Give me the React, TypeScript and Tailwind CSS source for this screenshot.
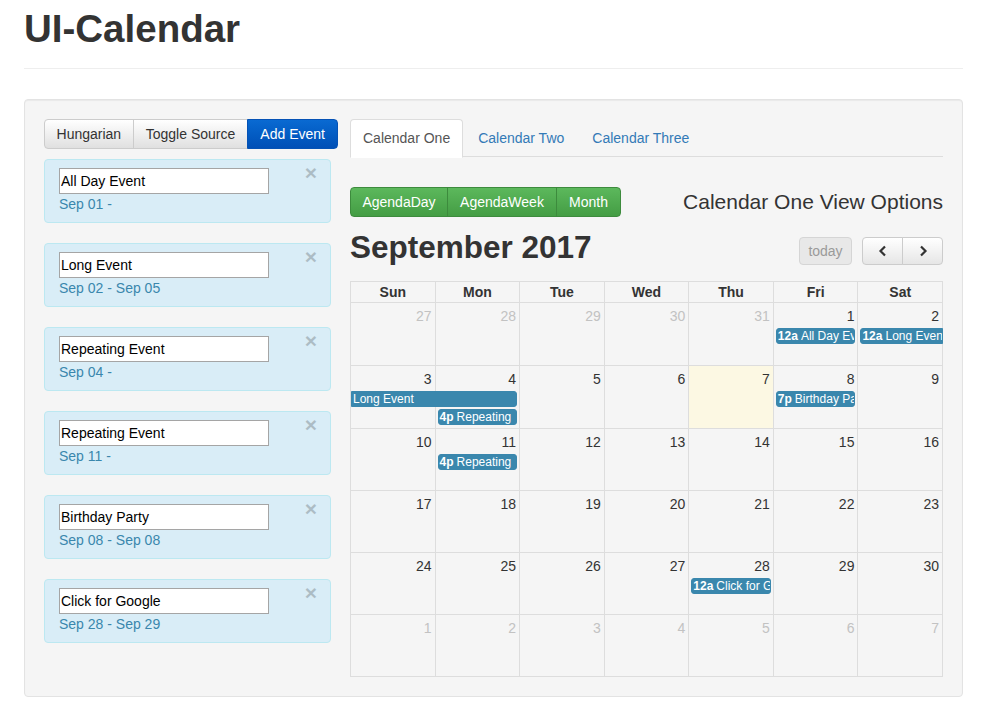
import React from "react";

type Ev = { col: number; span: number; row: number; time?: string; title: string; contLeft?: boolean; contRight?: boolean };
type Week = { days: { n: number; other?: boolean; today?: boolean }[]; h: string; events: Ev[] };

const colStart = ["", "col-start-1", "col-start-2", "col-start-3", "col-start-4", "col-start-5", "col-start-6", "col-start-7"];
const colSpan = ["", "col-span-1", "col-span-2", "col-span-3"];
const rowStart = ["", "row-start-2", "row-start-3"];

const mk = (nums: number[], other: (n: number, i: number) => boolean, today = -1) =>
  nums.map((n, i) => ({ n, other: other(n, i), today: n === today && !other(n, i) }));

const weeks: Week[] = [
  {
    days: mk([27, 28, 29, 30, 31, 1, 2], (_, i) => i < 5),
    h: "h-[63px]",
    events: [
      { col: 6, span: 1, row: 1, time: "12a", title: "All Day Event" },
      { col: 7, span: 1, row: 1, time: "12a", title: "Long Event", contRight: true },
    ],
  },
  {
    days: mk([3, 4, 5, 6, 7, 8, 9], () => false, 7),
    h: "h-[63px]",
    events: [
      { col: 1, span: 2, row: 1, title: "Long Event", contLeft: true },
      { col: 2, span: 1, row: 2, time: "4p", title: "Repeating" },
      { col: 6, span: 1, row: 1, time: "7p", title: "Birthday Party" },
    ],
  },
  {
    days: mk([10, 11, 12, 13, 14, 15, 16], () => false),
    h: "h-[62px]",
    events: [{ col: 2, span: 1, row: 1, time: "4p", title: "Repeating" }],
  },
  { days: mk([17, 18, 19, 20, 21, 22, 23], () => false), h: "h-[62px]", events: [] },
  {
    days: mk([24, 25, 26, 27, 28, 29, 30], () => false),
    h: "h-[62px]",
    events: [{ col: 5, span: 1, row: 1, time: "12a", title: "Click for Google" }],
  },
  { days: mk([1, 2, 3, 4, 5, 6, 7], () => true), h: "h-[62px]", events: [] },
];

const cards = [
  { title: "All Day Event", date: "Sep 01 -" },
  { title: "Long Event", date: "Sep 02 - Sep 05" },
  { title: "Repeating Event", date: "Sep 04 -" },
  { title: "Repeating Event", date: "Sep 11 -" },
  { title: "Birthday Party", date: "Sep 08 - Sep 08" },
  { title: "Click for Google", date: "Sep 28 - Sep 29" },
];

function EventCard({ title, date }: { title: string; date: string }) {
  return (
    <div className="relative w-[287px] h-[64px] rounded-[4px] border border-[#bce8f1] bg-[#d9edf7] pl-[14px] pt-[8px]">
      <input
        defaultValue={title}
        className="block w-[210px] h-[26px] border border-[#a5a5a5] bg-white pl-[1px] text-[14px] text-black outline-none"
      />
      <div className="text-[14px] leading-[20px] text-[#3a87ad]">{date}</div>
      <span className="absolute right-[13px] top-[3px] text-[21px] font-bold leading-[20px] text-black opacity-20">×</span>
    </div>
  );
}

function Chip({ ev }: { ev: Ev }) {
  return (
    <div
      className={`${colStart[ev.col]} ${colSpan[ev.span]} ${ev.row === 2 ? rowStart[2] : rowStart[1]} -mt-px h-[16px] self-start overflow-hidden whitespace-nowrap border border-[#3a87ad] bg-[#3a87ad] pl-[1px] text-[12px] leading-[14px] text-white ${
        ev.contLeft ? "ml-0 mr-[3px] rounded-r-[3px]" : ev.contRight ? "ml-[2px] mr-0 rounded-l-[3px]" : "ml-[2px] mr-[3px] rounded-[3px]"
      }`}
    >
      {ev.time && <b className="mr-[3px]">{ev.time}</b>}
      {ev.title}
    </div>
  );
}

function Calendar() {
  const heads = ["Sun", "Mon", "Tue", "Wed", "Thu", "Fri", "Sat"];
  return (
    <div className="border-l border-t border-[#ddd]">
      <div className="grid grid-cols-7">
        {heads.map((h) => (
          <div key={h} className="h-[21px] border-r border-b border-[#ddd] text-center text-[14px] font-bold leading-[20px] text-[#333]">
            {h}
          </div>
        ))}
      </div>
      {weeks.map((w, wi) => (
        <div key={wi} className={`grid grid-cols-7 grid-rows-[26px_18px_18px_1fr] ${w.h}`}>
          {w.days.map((d, i) => (
            <div
              key={i}
              className={`${colStart[i + 1]} row-start-1 row-span-4 border-r border-b border-[#ddd] pr-[3px] pt-[3px] text-right text-[14px] leading-[20px] ${
                d.today ? "bg-[#fcf8e3]" : ""
              } ${d.other ? "text-[#c2c2c2]" : "text-[#333]"}`}
            >
              {d.n}
            </div>
          ))}
          {w.events.map((ev, i) => (
            <Chip key={i} ev={ev} />
          ))}
        </div>
      ))}
    </div>
  );
}

export default function App() {
  return (
    <div className="min-h-[717px] bg-white font-['Liberation_Sans',Arial,sans-serif] text-[#333]">
      <div className="mx-[24px] w-[939px]">
        <div className="border-b border-[#eee] pt-[8px] pb-[18px]">
          <h1 className="text-[38.5px] font-bold leading-[42px] text-[#333]">UI-Calendar</h1>
        </div>
        <div className="mt-[30px] flex gap-[12px] rounded-[4px] border border-[#e3e3e3] bg-[#f5f5f5] p-[19px] shadow-[inset_0_1px_1px_rgba(0,0,0,0.05)]">
          <div className="w-[294px] shrink-0">
            <div className="flex h-[30px] text-[14px]">
              <button className="w-[90px] rounded-l-[4px] border border-[#ccc] bg-gradient-to-b from-white to-[#e0e0e0] text-[#333]">Hungarian</button>
              <button className="w-[116px] -ml-px border border-[#ccc] bg-gradient-to-b from-white to-[#e0e0e0] text-[#333]">Toggle Source</button>
              <button className="w-[91px] -ml-px rounded-r-[4px] border border-[#0552b5] bg-gradient-to-b from-[#0a6ad2] to-[#004fb6] text-white">Add Event</button>
            </div>
            <div className="mt-[10px] flex flex-col gap-[20px]">
              {cards.map((c, i) => (
                <EventCard key={i} {...c} />
              ))}
            </div>
          </div>
          <div className="flex-1">
            <div className="flex h-[38px] border-b border-[#ddd] text-[14px]">
              <div className="-mb-px h-[39px] rounded-t-[4px] border border-[#ddd] border-b-transparent bg-white px-[12px] leading-[36px] text-[#555]">
                Calendar One
              </div>
              <div className="ml-[2px] px-[13px] leading-[38px] text-[#337ab7]">Calendar Two</div>
              <div className="ml-[2px] px-[13px] leading-[38px] text-[#337ab7]">Calendar Three</div>
            </div>
            <div className="mt-[30px] flex h-[30px] items-center justify-between">
              <div className="flex h-[30px] text-[14px] text-white">
                <button className="w-[98px] rounded-l-[4px] border border-[#3d8b3d] bg-gradient-to-b from-[#5cb85c] to-[#449d44]">AgendaDay</button>
                <button className="w-[110px] -ml-px border border-[#3d8b3d] bg-gradient-to-b from-[#5cb85c] to-[#449d44]">AgendaWeek</button>
                <button className="w-[65px] -ml-px rounded-r-[4px] border border-[#3d8b3d] bg-gradient-to-b from-[#5cb85c] to-[#449d44]">Month</button>
              </div>
              <div className="text-[21px] leading-[30px] text-[#333]">Calendar One View Options</div>
            </div>
            <div className="mt-[12px] flex h-[36px] items-end justify-between">
              <h2 className="self-center text-[31.5px] font-bold leading-[36px] text-[#333]">September 2017</h2>
              <div className="flex items-center gap-[10px]">
                <button className="h-[28px] w-[53px] rounded-[4px] border border-[#d5d5d5] bg-[#e8e8e8] text-[14px] text-[#9a9a9a]">today</button>
                <div className="flex h-[28px]">
                  <button className="flex w-[41px] items-center justify-center rounded-l-[4px] border border-[#ccc] bg-gradient-to-b from-white to-[#e6e6e6]">
                    <svg width="10" height="12" viewBox="0 0 10 12"><path d="M7 1.5 L2.5 6 L7 10.5" fill="none" stroke="#333" strokeWidth="2.2" /></svg>
                  </button>
                  <button className="-ml-px flex w-[41px] items-center justify-center rounded-r-[4px] border border-[#ccc] bg-gradient-to-b from-white to-[#e6e6e6]">
                    <svg width="10" height="12" viewBox="0 0 10 12"><path d="M3 1.5 L7.5 6 L3 10.5" fill="none" stroke="#333" strokeWidth="2.2" /></svg>
                  </button>
                </div>
              </div>
            </div>
            <div className="mt-[16px]">
              <Calendar />
            </div>
          </div>
        </div>
      </div>
    </div>
  );
}
